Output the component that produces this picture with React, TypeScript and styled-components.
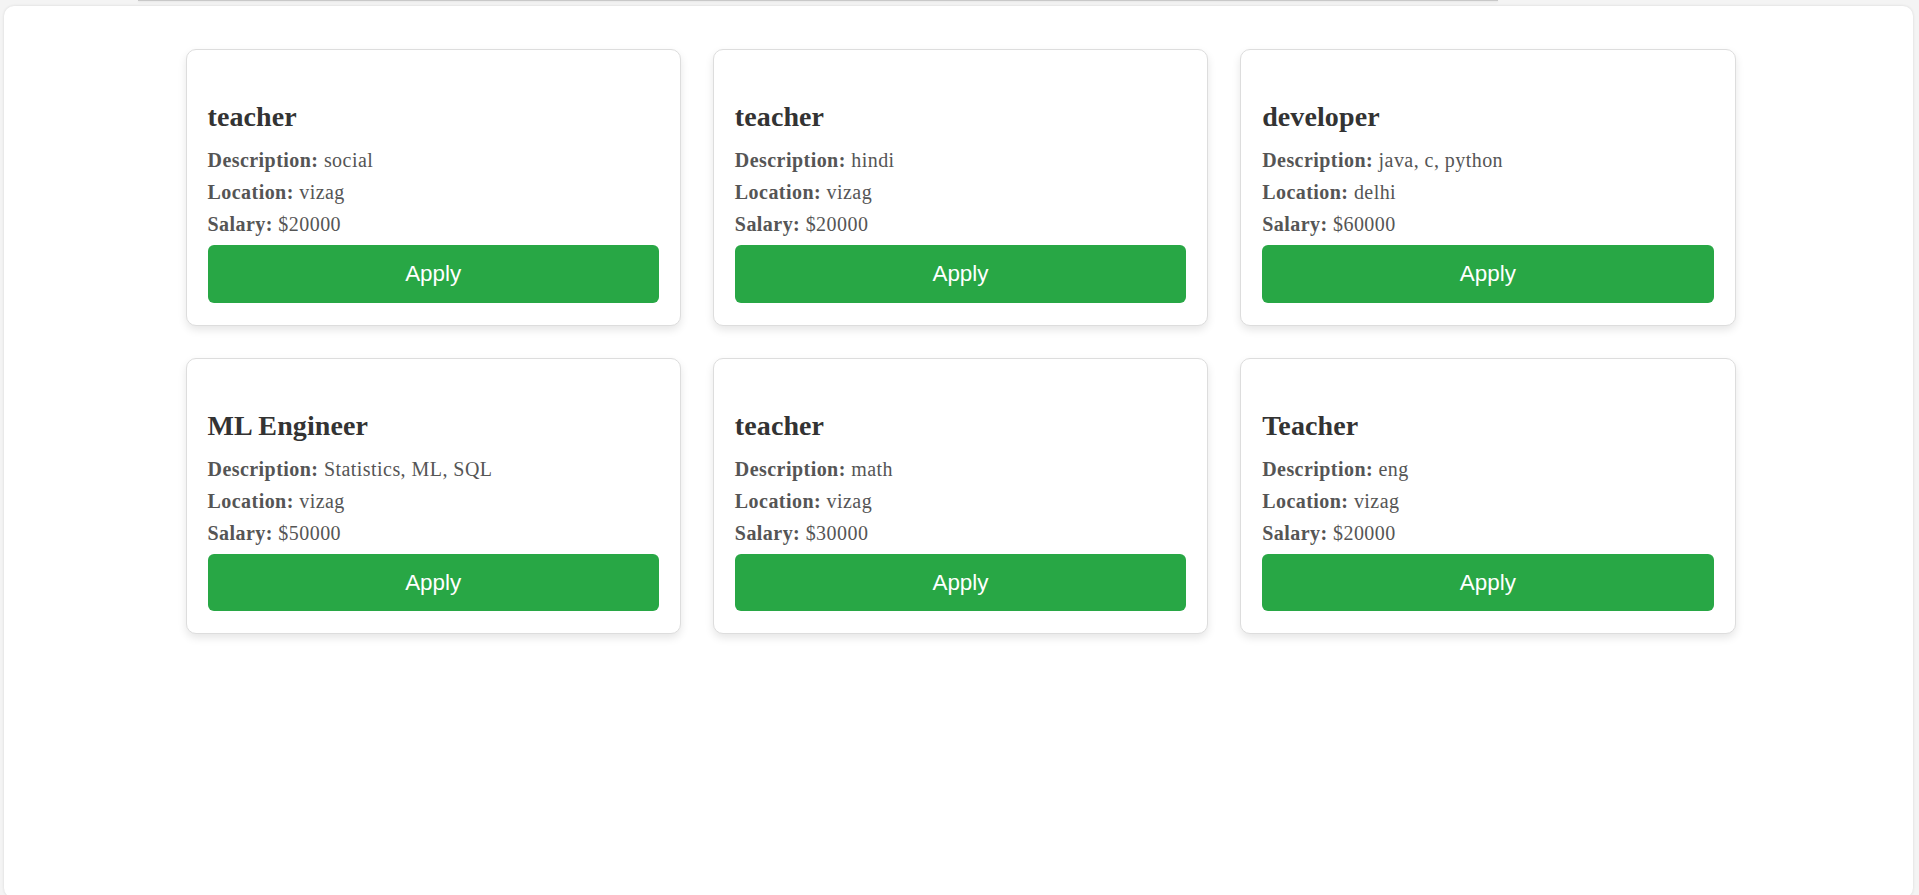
import React from 'react';
import styled, { createGlobalStyle } from 'styled-components';

type Job = {
	title: string;
	description: string;
	location: string;
	salary: number;
};

const jobs: Job[] = [
	{ title: 'teacher', description: 'social', location: 'vizag', salary: 20000 },
	{ title: 'teacher', description: 'hindi', location: 'vizag', salary: 20000 },
	{ title: 'developer', description: 'java, c, python', location: 'delhi', salary: 60000 },
	{ title: 'ML Engineer', description: 'Statistics, ML, SQL', location: 'vizag', salary: 50000 },
	{ title: 'teacher', description: 'math', location: 'vizag', salary: 30000 },
	{ title: 'Teacher', description: 'eng', location: 'vizag', salary: 20000 },
];

function App() {
	return (
		<>
			<GlobalStyle />
			<TopEdge />
			<Panel>
				<JobGrid>
					{jobs.map((job, i) => (
						<JobCard key={i}>
							<JobTitle>{job.title}</JobTitle>
							<Info>
								<strong>Description:</strong> {job.description}
							</Info>
							<Info>
								<strong>Location:</strong> {job.location}
							</Info>
							<Info>
								<strong>Salary:</strong> ${job.salary}
							</Info>
							<ApplyButton>Apply</ApplyButton>
						</JobCard>
					))}
				</JobGrid>
			</Panel>
		</>
	);
}

const GlobalStyle = createGlobalStyle`
	body {
		margin: 0;
		background-color: rgb(244, 244, 244);
		font-family: 'Liberation Serif', 'Times New Roman', serif;
		overflow: hidden;
	}
`

const TopEdge = styled.div`
	margin-left: 138px;
	width: 1360px;
	height: 1px;
	background-color: rgb(200, 200, 200);
	box-shadow: 0 1px 2px rgba(0, 0, 0, 0.08);
`

const Panel = styled.main`
	box-sizing: border-box;
	margin: 5px 6px 0 4px;
	min-height: 892px;
	padding: 43px 0 0 4px;
	background-color: rgb(255, 255, 255);
	border-radius: 10px;
	box-shadow: 0 0 3px rgba(0, 0, 0, 0.12);
`

const JobGrid = styled.div`
	display: grid;
	grid-template-columns: repeat(3, 1fr);
	gap: 32px;
	width: 1550px;
	margin: 0 auto;
`

const JobCard = styled.div`
	box-sizing: border-box;
	display: flex;
	flex-direction: column;
	padding: 21px 21px 22px;
	border: 1px solid rgb(221, 221, 221);
	border-radius: 10px;
	background-color: rgb(255, 255, 255);
	box-shadow: 0 4px 8px rgba(0, 0, 0, 0.1);
`

const JobTitle = styled.h2`
	margin: 30px 0 16px;
	color: rgb(51, 51, 51);
	font-size: 28px;
	font-weight: 700;
	line-height: 32px;
	letter-spacing: 0.1px;
`

const Info = styled.p`
	margin: 0 0 9px;
	color: rgb(85, 85, 85);
	font-size: 20px;
	line-height: 23px;
	letter-spacing: 0.45px;

	strong {
		font-weight: 700;
	}
`

const ApplyButton = styled.button`
	padding: 16px 0;
	border: none;
	border-radius: 6px;
	background-color: rgb(40, 167, 69);
	color: rgb(255, 255, 255);
	font-family: 'Liberation Sans', Arial, sans-serif;
	font-size: 22.4px;
	line-height: 25.7px;
	cursor: pointer;
`

export default App;
